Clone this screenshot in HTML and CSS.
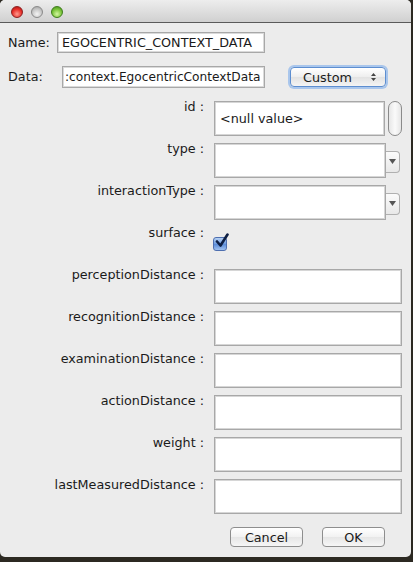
FILE: index.html
```html
<!DOCTYPE html>
<html>
<head>
<meta charset="utf-8">
<link rel="stylesheet" href="styles.css">
</head>
<body>
<div class="window">
  <div class="titlebar">
    <span class="light red"></span>
    <span class="light gray"></span>
    <span class="light green"></span>
  </div>
  <div class="content">
    <div class="toprow name-row">
      <span class="toplabel name-label">Name:</span>
      <div class="field name-field">EGOCENTRIC_CONTEXT_DATA</div>
    </div>
    <div class="toprow data-row">
      <span class="toplabel data-label">Data:</span>
      <div class="field data-field"><span class="data-text">:context.EgocentricContextData</span></div>
      <div class="popup">
        <span>Custom</span>
        <svg class="updown" width="7" height="10" viewBox="0 0 7 10"><path d="M3.5 1 L6 4 L1 4 Z M3.5 9 L6 6 L1 6 Z" fill="#444"/></svg>
      </div>
    </div>
    <div class="props">
      <div class="plabel">id :</div>
      <div class="pfield">
        <div class="box id-box">&lt;null value&gt;</div>
        <div class="scroll"></div>
      </div>

      <div class="plabel">type :</div>
      <div class="pfield">
        <div class="box combo-box"></div>
        <div class="arrowbtn"><svg width="7" height="5" viewBox="0 0 7 5"><path d="M0 0 L7 0 L3.5 5 Z" fill="#555"/></svg></div>
      </div>

      <div class="plabel">interactionType :</div>
      <div class="pfield">
        <div class="box combo-box"></div>
        <div class="arrowbtn"><svg width="7" height="5" viewBox="0 0 7 5"><path d="M0 0 L7 0 L3.5 5 Z" fill="#555"/></svg></div>
      </div>

      <div class="plabel">surface :</div>
      <div class="pfield check-field">
        <div class="checkbox">
          <svg class="check" width="16" height="16" viewBox="0 0 16 16"><path d="M3 8.5 L6.5 12.5 L13.5 1.5" fill="none" stroke="#0e1f44" stroke-width="2.6" stroke-linecap="round" stroke-linejoin="round"/></svg>
        </div>
      </div>

      <div class="plabel">perceptionDistance :</div>
      <div class="pfield"><div class="box full"></div></div>

      <div class="plabel">recognitionDistance :</div>
      <div class="pfield"><div class="box full"></div></div>

      <div class="plabel">examinationDistance :</div>
      <div class="pfield"><div class="box full"></div></div>

      <div class="plabel">actionDistance :</div>
      <div class="pfield"><div class="box full"></div></div>

      <div class="plabel">weight :</div>
      <div class="pfield"><div class="box full"></div></div>

      <div class="plabel">lastMeasuredDistance :</div>
      <div class="pfield"><div class="box full"></div></div>
    </div>
    <div class="buttons">
      <div class="btn cancel">Cancel</div>
      <div class="btn ok">OK</div>
    </div>
  </div>
</div>
</body>
</html>
```

FILE: styles.css
```css
html, body {
  margin: 0;
  padding: 0;
}
body {
  width: 413px;
  height: 562px;
  background: #2c2922;
  font-family: "DejaVu Sans", "Noto Sans", sans-serif;
  font-size: 12.75px;
  color: #1a1a1a;
  overflow: hidden;
}
.window {
  width: 411px;
  height: 557px;
  background: #ececec;
  border-radius: 5px;
  overflow: hidden;
  display: flex;
  flex-direction: column;
}
.titlebar {
  flex: none;
  height: 23px;
  box-sizing: border-box;
  border-bottom: 1px solid #5a5a5a;
  background: linear-gradient(#ededed, #d0d0d0);
  display: flex;
  align-items: center;
  gap: 8px;
  padding-left: 11px;
  padding-top: 1px;
}
.light {
  width: 12px;
  height: 12px;
  border-radius: 50%;
  box-sizing: border-box;
}
.red {
  background: radial-gradient(circle at 50% 70%, #ff9a8e 0%, #e7302a 55%, #a51010 100%);
  border: 1px solid #8c2020;
}
.gray {
  background: radial-gradient(circle at 50% 70%, #f4f4f4 0%, #c8c8c8 55%, #9a9a9a 100%);
  border: 1px solid #8a8a8a;
}
.green {
  background: radial-gradient(circle at 50% 70%, #d4f7a0 0%, #7ac43a 55%, #3f8a14 100%);
  border: 1px solid #3e7d1c;
}
.content {
  flex: 1;
  display: flex;
  flex-direction: column;
  padding: 9px 10px 0 8px;
}
.toprow {
  display: flex;
  align-items: center;
}
.toplabel {
  line-height: 14px;
  flex: none;
}
.name-label {
  width: 49px;
}
.data-label {
  width: 54px;
}
.field {
  background: #fff;
  border: 1px solid #a8a8a8;
  box-shadow: inset 0 0 0 1px #dadada;
  box-sizing: border-box;
  padding: 0 4px;
  white-space: nowrap;
  overflow: hidden;
  display: flex;
  align-items: center;
}
.name-field {
  width: 208px;
  height: 21px;
}
.data-row {
  margin-top: 13px;
}
.data-field {
  width: 203px;
  height: 22px;
  padding: 0 2px;
}
.data-text {
  flex: none;
  font-size: 12.2px;
}
.popup {
  margin-left: 25px;
  width: 96px;
  height: 20px;
  box-sizing: border-box;
  border: 1px solid #5d8ed0;
  border-radius: 4px;
  box-shadow: 0 0 0 2px #a9c6ec;
  background: linear-gradient(#ffffff, #eeeeee 50%, #e2e2e2 51%, #f4f4f4);
  display: flex;
  align-items: center;
  justify-content: space-between;
  padding: 0 8px 0 12px;
}
.props {
  margin-top: 13px;
  display: grid;
  grid-template-columns: 196px 1fr;
  column-gap: 10px;
  row-gap: 7px;
  grid-auto-rows: 35px;
}
.plabel {
  text-align: right;
  line-height: 12px;
  white-space: nowrap;
}
.pfield {
  display: flex;
  align-items: center;
}
.box {
  background: #fff;
  border: 1px solid #a8a8a8;
  box-shadow: inset 0 0 0 1px #d6d6d6;
  box-sizing: border-box;
  height: 35px;
  align-self: stretch;
}
.id-box {
  width: 171px;
  display: flex;
  align-items: center;
  padding-left: 5px;
}
.scroll {
  margin-left: 3px;
  width: 14px;
  height: 35px;
  box-sizing: border-box;
  border: 1px solid #8a8a8a;
  border-radius: 7px;
  background: linear-gradient(90deg, #e6e6e6, #fafafa 50%, #e6e6e6);
}
.combo-box {
  width: 172px;
}
.arrowbtn {
  width: 14px;
  height: 22px;
  box-sizing: border-box;
  border: 1px solid #b0b0b0;
  border-left: none;
  border-radius: 0 4px 4px 0;
  background: linear-gradient(#fbfbfb, #e8e8e8);
  display: flex;
  align-items: center;
  justify-content: center;
  margin-top: 2px;
}
.full {
  width: 188px;
}
.check-field {
  align-items: flex-start;
}
.checkbox {
  position: relative;
  margin-top: 10px;
  margin-left: -1px;
  width: 14px;
  height: 14px;
  box-sizing: border-box;
  border: 1px solid #4e6fb0;
  border-radius: 3px;
  background: linear-gradient(#b8d2f4, #6d9be0 50%, #5a8bd8 51%, #9fc1f0);
}
.check {
  position: absolute;
  left: 0px;
  top: -5px;
}
.buttons {
  margin-top: 13px;
  display: flex;
  justify-content: flex-end;
  gap: 19px;
  padding-right: 16px;
}
.btn {
  height: 20px;
  box-sizing: border-box;
  border: 1px solid #8e8e8e;
  border-radius: 4px;
  background: linear-gradient(#ffffff, #f2f2f2 50%, #e6e6e6 51%, #f6f6f6);
  display: flex;
  align-items: center;
  justify-content: center;
}
.cancel {
  width: 73px;
}
.ok {
  width: 63px;
}
```
